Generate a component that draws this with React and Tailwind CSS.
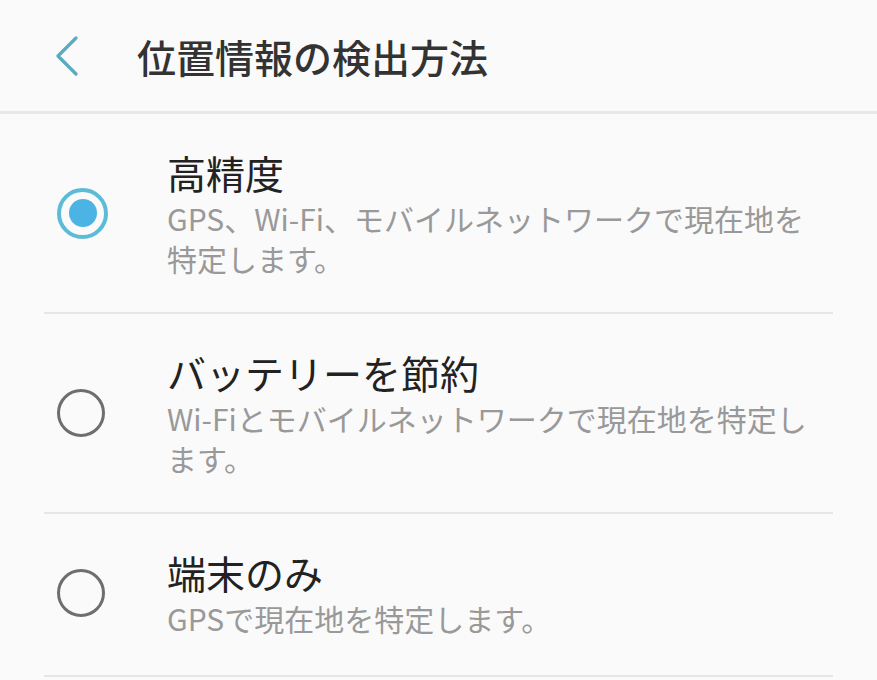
const font = { fontFamily: '"Noto Sans CJK JP", "Noto Sans", sans-serif' };

const options = [
  {
    id: 'high',
    title: '高精度',
    lines: ['GPS、Wi-Fi、モバイルネットワークで現在地を', '特定します。'],
  },
  {
    id: 'battery',
    title: 'バッテリーを節約',
    lines: ['Wi-Fiとモバイルネットワークで現在地を特定し', 'ます。'],
  },
  {
    id: 'device',
    title: '端末のみ',
    lines: ['GPSで現在地を特定します。'],
  },
];

function Radio({ checked }) {
  if (checked) {
    return (
      <span className="flex h-[51px] w-[51px] items-center justify-center rounded-full border-[4px] border-[#5cbcd8]">
        <span className="h-[28px] w-[28px] rounded-full bg-[#4cb4e4]" />
      </span>
    );
  }
  return <span className="block h-[48px] w-[48px] rounded-full border-[3px] border-[#6e6e6e]" />;
}

export default function App() {
  const selected = 'high';

  return (
    <div className="min-h-[680px] w-full bg-[#fafafa] text-[#222]" style={font}>
      <header className="flex h-[114px] items-center border-b-[3px] border-[#e8e8e8]">
        <button type="button" className="ml-[54px] flex h-[40px] w-[28px] items-center" aria-label="戻る">
          <svg width="26" height="40" viewBox="0 0 26 40" fill="none" aria-hidden="true">
            <path d="M22 2 L4 20 L22 38" stroke="#5aabbf" strokeWidth="3.2" strokeLinecap="round" strokeLinejoin="round" />
          </svg>
        </button>
        <h1 className="ml-[55px] text-[39px] leading-[48px] font-medium text-[#333]">位置情報の検出方法</h1>
      </header>

      <ul className="mx-[44px]">
        {options.map((opt) => (
          <li key={opt.id} className="flex items-center border-b-2 border-[#e6e6e6] py-[34px] last:pb-[37px]">
            <div className="flex w-[123px] shrink-0 items-center pl-[13px]">
              <Radio checked={opt.id === selected} />
            </div>
            <div className="min-w-0">
              <div className="text-[39px] leading-[48px] text-[#222]">{opt.title}</div>
              <p className="mt-[2px] text-[30px] leading-[40px] whitespace-nowrap text-[#999]">
                {opt.lines.map((line, i) => (
                  <span key={i} className="block">
                    {line}
                  </span>
                ))}
              </p>
            </div>
          </li>
        ))}
      </ul>
    </div>
  );
}
